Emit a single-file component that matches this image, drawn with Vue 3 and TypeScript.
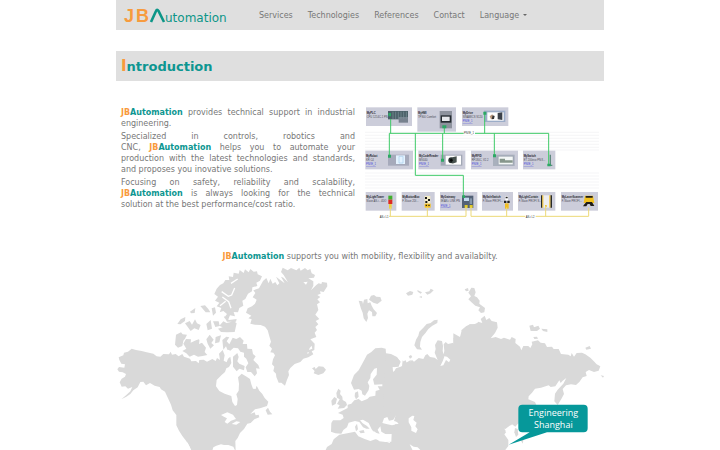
<script setup lang="ts">
interface Device {
  x: number
  y: number
  w: number
  h: number
  name: string
  model: string
  link?: boolean
}

const navLinks: string[] = ['Services', 'Technologies', 'References', 'Contact']

const devices: Device[] = [
  { x: 3, y: 7, w: 138, h: 56, name: 'MyPLC', model: 'CPU 1214C-1 PN' },
  { x: 157, y: 7, w: 116, h: 73, name: 'MyHMI', model: 'TP900 Comfort' },
  { x: 291, y: 7, w: 139, h: 56, name: 'MyDrive', model: 'SINAMICS S120', link: true },
  { x: 1, y: 137, w: 143, h: 56, name: 'MyRobot', model: 'KR C4', link: true },
  { x: 160, y: 137, w: 141, h: 56, name: 'MyCodeReader', model: 'MV440', link: true },
  { x: 318, y: 137, w: 141, h: 56, name: 'MyRFID', model: 'RF180C, V2.2', link: true },
  { x: 474, y: 137, w: 97, h: 56, name: 'MySwitch', model: 'ET 200eco PN 8...', link: true },
  { x: 2, y: 261, w: 92, h: 56, name: 'MyLightTower', model: 'Slave AS-i - 4DO' },
  { x: 110, y: 261, w: 99, h: 56, name: 'MyButtonBox', model: 'F-Slave 2DI...' },
  { x: 225, y: 261, w: 112, h: 56, name: 'MyGateway', model: 'IE/AS-i LINK PN', link: true },
  { x: 351, y: 261, w: 93, h: 56, name: 'MySafeSwitch', model: 'F-Slave PROFI...' },
  { x: 459, y: 261, w: 112, h: 56, name: 'MyLightCurtain', model: 'F-Slave PROFI S...' },
  { x: 588, y: 261, w: 111, h: 56, name: 'MyLaserScanner', model: 'F-Slave PROFI...' },
]

const gridLines: number[] = [82, 91, 100, 109, 118, 127, 135, 204, 213, 222, 231, 240, 249]
</script>

<template>
  <div class="page">
    <header class="topbar">
      <a class="logo" href="#" aria-label="JBAutomation">
        <svg viewBox="0 0 108 20" class="logo-art">
          <text x="1" y="17" class="logo-jb">J</text>
          <text x="13" y="17" class="logo-jb">B</text>
          <path d="M28 17 L33 6 Q34 3.500 35.500 6 L41 17" fill="none" stroke="#0d9688" stroke-width="2.600" />
          <text x="42" y="17" class="logo-rest">utomation</text>
        </svg>
      </a>
      <nav class="nav">
        <a v-for="label in navLinks" :key="label" href="#">{{ label }}</a>
        <button type="button">Language <span class="caret"></span></button>
      </nav>
    </header>

    <main>
      <h1 class="title"><span class="initial">I</span>ntroduction</h1>

      <section class="intro">
        <div class="copy">
          <p><span class="brand accent">JB</span><span class="brand">Automation</span> provides technical support in industrial engineering.</p>
          <p>Specialized in controls, robotics and CNC,&nbsp;<span class="brand accent">JB</span><span class="brand">Automation</span>&nbsp;helps you to automate your production with the latest technologies and standards, and proposes you inovative solutions.</p>
          <p>Focusing on safety, reliability and scalability, <span class="brand accent">JB</span><span class="brand">Automation</span> is always looking for the technical solution at the best performance/cost ratio.</p>
        </div>

        <svg class="network" viewBox="0 0 702 345" role="img" aria-label="Network diagram">
          <path v-for="y in gridLines" :key="y" :d="`M0 ${y}H702`" stroke="#f0f0f3" stroke-width="2" />
          <g v-for="d in devices" :key="d.name">
            <rect :x="d.x" :y="d.y" :width="d.w" :height="d.h" fill="#cccdda" />
            <text :x="d.x + 2" :y="d.y + 19" class="dev-name">{{ d.name }}</text>
            <text :x="d.x + 2" :y="d.y + 31" class="dev-model">{{ d.model }}</text>
            <text v-if="d.link" :x="d.x + 2" :y="d.y + 44" class="dev-link">PN/IE_1</text>
          </g>

          <!-- controller -->
          <path d="M69 18h60v25h-60z" fill="#4b6068" />
          <path d="M101 36h28v17h-28z" fill="#77818e" />
          <path d="M84 20v22M92 20v22M100 20v22M108 20v22M116 20v22M124 20v22" stroke="#7c949a" stroke-width="2" />
          <!-- panel -->
          <path d="M224 18h37v52h-37z" fill="#8d929d" />
          <path d="M227 31h32v22h-32z" fill="#252b31" />
          <path d="M231 35h23v13h-23z" fill="#e6e8ec" />
          <!-- drive -->
          <path d="M357 17h64v34h-64z" fill="#9cadc8" />
          <path d="M367 22h49v25h-49z" fill="#fff" />
          <path d="M398 24l14-2v23l-14-2z" fill="#3c424a" />
          <path d="M374 34l8-6 4 10-8 5z" fill="#b69479" />
          <path d="M383 31l6 2-2 9-7 1z" fill="#333" />
          <!-- robot controller -->
          <path d="M69 149h63v33h-63z" fill="#a6aabb" />
          <path d="M93 151h27v26h-27z" fill="#e4f3ff" />
          <path d="M102 154h12v20h-12z" fill="none" stroke="#a8ccec" stroke-width="2" />
          <!-- code reader -->
          <path d="M227 149h65v33h-65z" fill="#a2a8b5" />
          <path d="M242 152h46v27h-46z" fill="#fff" />
          <circle cx="259" cy="166" r="9" fill="#26302e" />
          <path d="M262 157l13-3v18l-13 4z" fill="#46504d" />
          <circle cx="259" cy="166" r="4" fill="#080b0a" />
          <!-- identification unit -->
          <path d="M384 149h65v34h-65z" fill="#a9b0bd" />
          <path d="M400 154h44v25h-44z" fill="#f3f7f6" stroke="#788491" />
          <path d="M404 161h16v5h23v7h-39z" fill="#86968c" />
          <path d="M556 149v31M550 181h12" stroke="#5f897f" stroke-width="4" />
          <!-- signal column -->
          <path d="M70 272h12v12h-12z" fill="#40af2d" />
          <path d="M70 284h12v13h-12z" fill="#dc2a22" />
          <path d="M72 297h8v14h-8z" fill="#edcf43" />
          <!-- push buttons -->
          <path d="M179 273h17v35h-17z" fill="#f6eec7" />
          <path d="M180 276h6v6h-6zM189 282h6v6h-6zM181 288h6v6h-6z" fill="#171717" />
          <path d="M179 296h18v12h-18z" fill="#f1bc1d" />
          <path d="M182 299h4v4h-4zM190 299h4v4h-4z" fill="#222" />
          <!-- gateway -->
          <path d="M291 272h34v37h-34z" fill="#536277" />
          <path d="M297 278h15v10h-15z" fill="#c1d8ed" />
          <path d="M314 280h7v17h-7z" fill="#8698ab" />
          <path d="M299 300h9v9h-9zM314 300h9v9h-9z" fill="#e3ca24" />
          <!-- safety switch -->
          <path d="M421 273h8v14h-8z" fill="#fff" />
          <path d="M417 287h7v7h-7zM427 287h7v7h-7zM422 275h6v5h-6z" fill="#222" />
          <path d="M420 295h11v16h-11z" fill="#f1be23" />
          <!-- light curtain -->
          <path d="M528 271h30v37h-30z" fill="#eeeef0" />
          <path d="M528 271h4v37h-4zM556 271h5v37h-5z" fill="#272a2b" />
          <path d="M532 271h3v37h-3zM553 271h3v37h-3zM540 300h5v6h-5z" fill="#efbd25" />
          <!-- scanner -->
          <path d="M660 272h24l4 22h-32z" fill="#f2c11f" />
          <path d="M662 273h21v5h-21zM657 299l7-8h17l7 12h-11l-3-6h-6l-4 7h-10z" fill="#201e18" />

          <g fill="none" stroke="#3fca68" stroke-width="3">
            <path d="M77 42V85M73 152V85H551V180M151 85V211H295V275M238 66V85M233 85V166M359 23V85M388 85V152" />
          </g>
          <path d="M70 24h8v10h-8zM69 149h9v9h-9zM232 61h12v9h-12zM228 161h9v9h-9zM355 20h9v9h-9zM384 148h9v9h-9zM292 271h8v8h-8zM547 176h10v8h-10z" fill="#2da765" />
          <path d="M42 334H303V305M318 305V334H671V308M76 307V334M187 307V334M425 307V334M542 302V334" fill="none" stroke="#ecd978" stroke-width="3" />
          <path d="M296 79h34v12h-34zM42 328h30v12h-30zM480 328h32v12h-32z" fill="#fff" />
          <text x="297" y="88" class="bus">PN/IE_1</text>
          <text x="44" y="338" class="bus">AS-i L1</text>
          <text x="482" y="338" class="bus">AS-i L2</text>
        </svg>
      </section>

      <p class="tagline"><span class="brand accent">JB</span><span class="brand">Automation</span> supports you with mobility, flexibility and availabilty.</p>

      <svg class="map" viewBox="0 0 1464 558" role="img" aria-label="World map">
        <!-- North America -->
        <g transform="translate(-18 -12)" class="land">
          <path d="M26 292L40 286 42 278 54 275 65 266 78 270 95 273 110 277 130 281 140 289 151 290 160 282 177 283 182 275 186 284 197 282 206 289 217 282 222 290 240 296 244 304 258 303 266 310 268 300 281 299 291 305 307 297 317 303 321 294 330 300 327 281 338 270 344 286 341 302 350 307 354 296 361 290 364 309 357 321 349 325 345 336 334 346 320 360 318 379 328 393 344 401 364 408 367 426 375 438 381 435 383 417 379 403 386 392 387 371 384 352 395 341 410 350 420 357 424 373 429 386 437 387 440 377 448 392 457 402 464 414 475 425 471 438 450 445 435 448 421 462 434 457 437 466 446 464 448 472 433 478 422 489 412 491 402 507 390 519 383 534 376 543 377 575 370 560 355 555 342 555 333 553 319 557 310 562 306 575H246L238 558 228 542 217 528 207 512 199 496 199 465 188 451 183 434 174 415 165 395 153 388 149 381 134 377 120 369 108 376 100 365 91 366 83 382 70 391 61 402 49 410 34 418 49 405 61 394 67 381 54 386 46 379 35 380 29 367 35 356 45 350 48 342 38 337 27 335 22 328 27 321 43 323 45 313 34 311 28 300Z" />
          <path d="M320 86L330 75 340 70 346 60 358 60 356 49 369 51 371 38 386 41 389 30 401 39 405 28 416 37 421 27 431 35 441 34 443 43 456 49 450 62 439 68 442 78 427 82 426 94 414 101 406 117 397 122 400 137 388 144 384 157 371 156 375 169 360 166 355 178 342 174 351 162 340 153 329 157 334 144 320 139 328 128 315 122 324 110 313 102Z" />
          <path d="M198 224L213 217 218 223 231 224 225 236 220 242 217 258 204 263 195 254ZM202 192L212 178 226 171 225 183 211 193ZM240 155L256 144 254 159 243 160ZM225 190L239 183 246 194 255 178 261 190 272 195 266 210 253 205 242 213ZM271 138L285 136 295 147 301 157 287 157ZM305 145L315 142 318 158 309 167ZM220 251L228 237 243 238 242 248 258 241 269 237 267 252 276 248 288 263 284 276 292 285 278 288 264 290 252 284 239 290 229 280 217 273 229 266ZM289 192L302 180 306 206 293 211ZM309 184L326 184 329 198 316 201ZM289 238L299 224 311 239 304 249 312 256 301 266 293 251ZM317 231L333 226 328 247 315 250ZM337 240L349 230 358 232 350 244 358 253 368 233 379 237 390 231 401 242 398 252 411 252 412 266 426 267 429 282 437 289 430 300 445 315 449 326 438 325 441 340 434 349 423 336 412 336 407 322 415 310 409 296 402 290 402 278 391 275 384 265 371 263 361 272 352 269 348 259 340 269ZM328 197L340 184 350 189 372 184 380 190 374 216 351 217 333 216 324 206 338 202ZM341 167L357 180 380 177 378 185 351 185ZM369 290L382 279 386 291 382 304 388 311 404 318 402 331 388 326 380 334 369 320ZM467 451L474 443 480 455 487 463 473 464Z" />
          <path d="M333 465L352 457 369 464 378 477 363 482 352 491 344 486 351 475 343 471ZM365 492L379 484 391 486 379 494ZM387 294L391 298 389 307 385 303Z" fill="#fff" />
          <path d="M335 95L355 109 365 105 374 84M337 111L356 125 363 145M330 137L347 124M383 57L363 70M367 283L354 271M277 248L267 235" fill="none" stroke="#fff" stroke-width="4" />
          <path d="M231 548L242 574" stroke="#fff" stroke-width="4" />
        </g>
        <!-- Greenland and Iceland -->
        <g transform="translate(372 -12)" class="land">
          <path d="M69 63L79 54 86 70 91 56 98 71 106 66 112 76 118 70 108 50 122 61 134 70 123 50 130 53 144 67 131 45 123 36 128 23 143 31 153 24 169 31 178 23 182 32 195 24 203 31 211 27 215 40 225 45 222 53 205 55 220 64 220 77 213 91 229 75 236 70 244 72 246 66 261 68 262 79 251 96 240 94 242 101 232 105 241 111 232 118 240 127 231 133 235 150 226 164 238 177 227 183 235 193 226 201 231 210 224 218 229 231 211 238 224 251 223 270 215 274 220 283 205 292 190 296 181 306 164 312 151 324 145 334 147 345 140 362 135 377 124 368 116 368 109 351 108 341 100 333 103 320 96 313 99 298 105 286 100 278 91 277 96 266 88 257 93 245 88 229 83 211 75 200 62 195 45 194 31 191 35 178 25 175 34 167 18 158 23 145 36 139 45 131 50 119 38 112 46 99 40 91 57 85Z" />
          <path d="M216 325L224 321 227 327 236 319 250 320 258 329 250 340 235 345 221 340 224 333Z" />
          <path d="M190 67L203 65 198 74ZM209 264L215 257 217 266 207 270ZM201 278L207 276 204 282Z" fill="#fff" />
        </g>
        <!-- Europe and North Africa -->
        <g transform="translate(372 -12)" class="land">
          <path d="M333 369L342 345 356 331 365 314 374 298 381 284 394 276 406 265 425 263 437 266 438 280 453 282 471 291 482 306 475 318 462 322 451 316 460 338 468 325 486 319 488 301 496 310 512 300V575H255L261 561 275 552 281 538 298 524 326 519 345 515 355 529 374 537 391 543 406 538 431 542 449 549 455 535 453 523 436 522 424 515 421 499 413 509 419 521 403 518 395 508 386 489 369 479 360 481 368 490 381 498 389 506 379 506 369 502 358 486 345 483 326 488 321 502 310 510 304 521 286 520 273 515 274 489 279 481 301 481 311 474 308 464 294 459 307 452 323 444 323 434 334 431 343 421 356 417 365 424 382 417 389 410 406 407 407 393 419 389 413 379 427 379 427 373 403 374 399 358 410 344 411 324 403 326 392 342 391 354 383 367 388 378 386 390 375 407 367 403 365 392 356 387 342 389Z" />
          <path d="M289 399L295 386 302 392 300 402 307 410 308 420 318 426 321 435 312 444 293 446 299 436 291 432 299 418 291 413ZM274 422L283 411 291 416 287 432 276 437ZM345 398L354 394 356 410 348 418 344 409ZM357 513L371 510 374 518 362 520ZM345 500L351 491 354 508 348 514ZM411 529L422 531 424 536 413 533Z" />
          <path d="M427 489L432 475 442 471 447 482 460 479 468 466 466 481 476 491 456 496 439 492Z" fill="#fff" />
        </g>
        <!-- Northern islands and Russia -->
        <g transform="translate(702 -12)" class="land">
          <path d="M26 122L37 124 39 132 42 119 52 117 53 130 61 127 65 137 71 148 81 159 76 169 67 169 66 156 57 151 52 161 54 174 49 186 41 175 38 158 33 146ZM57 119L63 107 72 105 79 110 91 111 95 122 82 132 70 128ZM168 100L180 93 190 96 187 104 174 107ZM202 90L216 97 212 101 203 95ZM225 97L238 94 242 86 251 91 242 100 232 104ZM207 111L215 108 216 114Z" />
          <path d="M193 256L198 239 205 227 208 215 220 203 230 192 242 189 252 181 263 179 262 189 247 197 235 207 227 218 216 231 211 246 210 260 216 269 201 268ZM176 289L183 285 187 291 180 296Z" />
          <path d="M106 281L121 284 138 292 151 304 146 320 128 321 129 335 145 330 153 320 162 318 160 306 166 300 172 312 186 300 192 305 206 294 220 297 226 286 232 282 240 291 254 293 263 300 254 278 257 267 255 255 263 241 276 243 279 258 278 273 283 290 278 304 271 318 280 316 288 300 297 307 301 299 291 290 280 288 283 272 281 253 287 246 294 252 310 248 320 270 322 258 311 249 310 233 327 235 336 225 334 211 348 199 360 193 375 196 385 185 396 190V575H125V545L107 547 101 535 120 528 132 521 136 492 149 494 145 487 132 483 137 466 120 455 100 440Z" />
          <path d="M176 475L187 467 193 468 190 480 200 488 196 499 203 508 198 519 184 512 184 502 176 487ZM179 553L191 560 203 562 216 575H190Z" fill="#fff" />
          <path d="M101 535L88 525 72 514 63 518 69 531 80 537 88 544 107 546 124 545 125 522 110 524Z" fill="#fff" />
        </g>
        <!-- East Asia -->
        <g transform="translate(1032 -12)" class="land">
          <path d="M-20 220L0 231 4 216 19 201 30 193 44 192 55 188 67 188 62 177 74 167 79 180 88 174 95 183 111 187 113 203 105 219 92 235 107 231 123 237 132 233 150 239 155 231 167 237 166 249 180 260 184 271 190 258 205 258 211 264 217 253 215 245 234 241 242 248 255 250 261 261 276 260 281 267 296 267 303 282 325 284 332 289 335 279 342 290 350 279 366 278 376 283 391 293 403 305 410 313 421 319 416 332 402 336 387 330 377 336 380 348 368 352 358 366 348 375 333 373 318 376 308 387 312 402 304 417 293 435 283 424 285 401 293 389 310 371 319 354 308 362 302 369 298 361 286 379 272 381 266 376 243 383 225 386 216 398 206 409 205 418 225 426 230 437 232 476 211 508 187 499 175 490 166 500 156 493 143 508 132 506 141 514 133 523 145 540 145 558 132 575H-20Z" />
          <path d="M14 88L24 84 26 92 18 94ZM25 98L34 83 43 84 47 97 43 108 51 112 59 122 58 131 75 144 73 157 63 159 55 151 60 142 46 137 36 128 25 118 33 109ZM208 197L219 194 222 202 235 197 240 206 231 213 212 213ZM244 206L262 208 262 216 249 213ZM220 231L231 230 234 236 223 237ZM376 263L389 258 393 266 379 269ZM422 346L432 348 429 353ZM182 540L191 536 188 551Z" />
          <path d="M136 507L151 496 164 503 163 516 170 530 164 542 152 531 149 518 137 517Z" fill="#fff" />
          <path d="M165 504L173 507 175 524 168 531 163 517Z" />
        </g>
        <!-- Office marker -->
        <g transform="translate(1032 -12)">
          <path d="M187 434H371Q383 434 383 446V505Q383 517 371 517H261L146 554 209 517H187Q175 517 175 505V446Q175 434 187 434Z" fill="#06989a" />
          <text x="280" y="467" class="marker">Engineering</text>
          <text x="280" y="503" class="marker">Shanghai</text>
        </g>
      </svg>
    </main>
  </div>
</template>

<style>
body {
  margin: 0;
  background: #fff;
}
</style>

<style scoped>
.page {
  max-width: 488px;
  margin: 0 auto;
  color: #777;
  font: 8px/11px "DejaVu Sans", Verdana, sans-serif;
}

.topbar {
  display: flex;
  align-items: center;
  gap: 28px;
  height: 30px;
  padding: 0 7px;
  background: #dfdfdf;
}

.logo,
.logo-art {
  display: block;
  width: 108px;
  height: 20px;
}

.logo-art {
  overflow: visible;
}

.logo-jb {
  fill: #f79b3e;
  font: bold 18px "Liberation Sans", Arial, sans-serif;
}

.logo-rest {
  fill: #0d9688;
  font: 12px "DejaVu Sans", Verdana, sans-serif;
}

.nav {
  display: flex;
  gap: 15px;
}

.nav a,
.nav button {
  padding: 0;
  border: 0;
  background: none;
  color: #777;
  font: inherit;
  text-decoration: none;
  white-space: nowrap;
}

.caret {
  display: inline-block;
  margin-left: 1px;
  border: 2px solid transparent;
  border-top-color: #666;
  border-bottom: 0;
  vertical-align: middle;
}

.title {
  height: 30px;
  margin: 21px 0 0;
  padding: 0 5px;
  background: #dfdfdf;
  color: #0d9691;
  font-size: 13px;
  line-height: 30px;
}

.initial {
  color: #f99a3c;
  font-size: 15px;
}

.intro {
  display: grid;
  grid-template-columns: 1fr 1fr;
  gap: 10px;
  padding: 24px 5px 0;
}

.copy {
  display: grid;
  align-content: start;
  gap: 2px;
  padding-top: 2px;
  text-align: justify;
}

.copy p {
  margin: 0;
}

.brand {
  color: #0d9691;
  font-weight: bold;
}

.accent {
  color: #f99a3c;
}

.network,
.map {
  display: block;
  width: 100%;
  height: auto;
}

.dev-name {
  fill: #24242c;
  font: bold 8px "Liberation Sans", sans-serif;
}

.dev-model {
  fill: #4a4a55;
  font: 8px "Liberation Sans", sans-serif;
}

.dev-link {
  fill: #4848dc;
  font: 8px "Liberation Sans", sans-serif;
  text-decoration: underline;
}

.bus {
  fill: #333;
  font: 8px "Liberation Sans", sans-serif;
}

.tagline {
  margin: 31px 0 0;
  padding-bottom: 2px;
  text-align: center;
}

.land {
  fill: #d9d9d9;
}

.marker {
  fill: #fff;
  font: 27px "Open Sans", sans-serif;
  text-anchor: middle;
}
</style>
